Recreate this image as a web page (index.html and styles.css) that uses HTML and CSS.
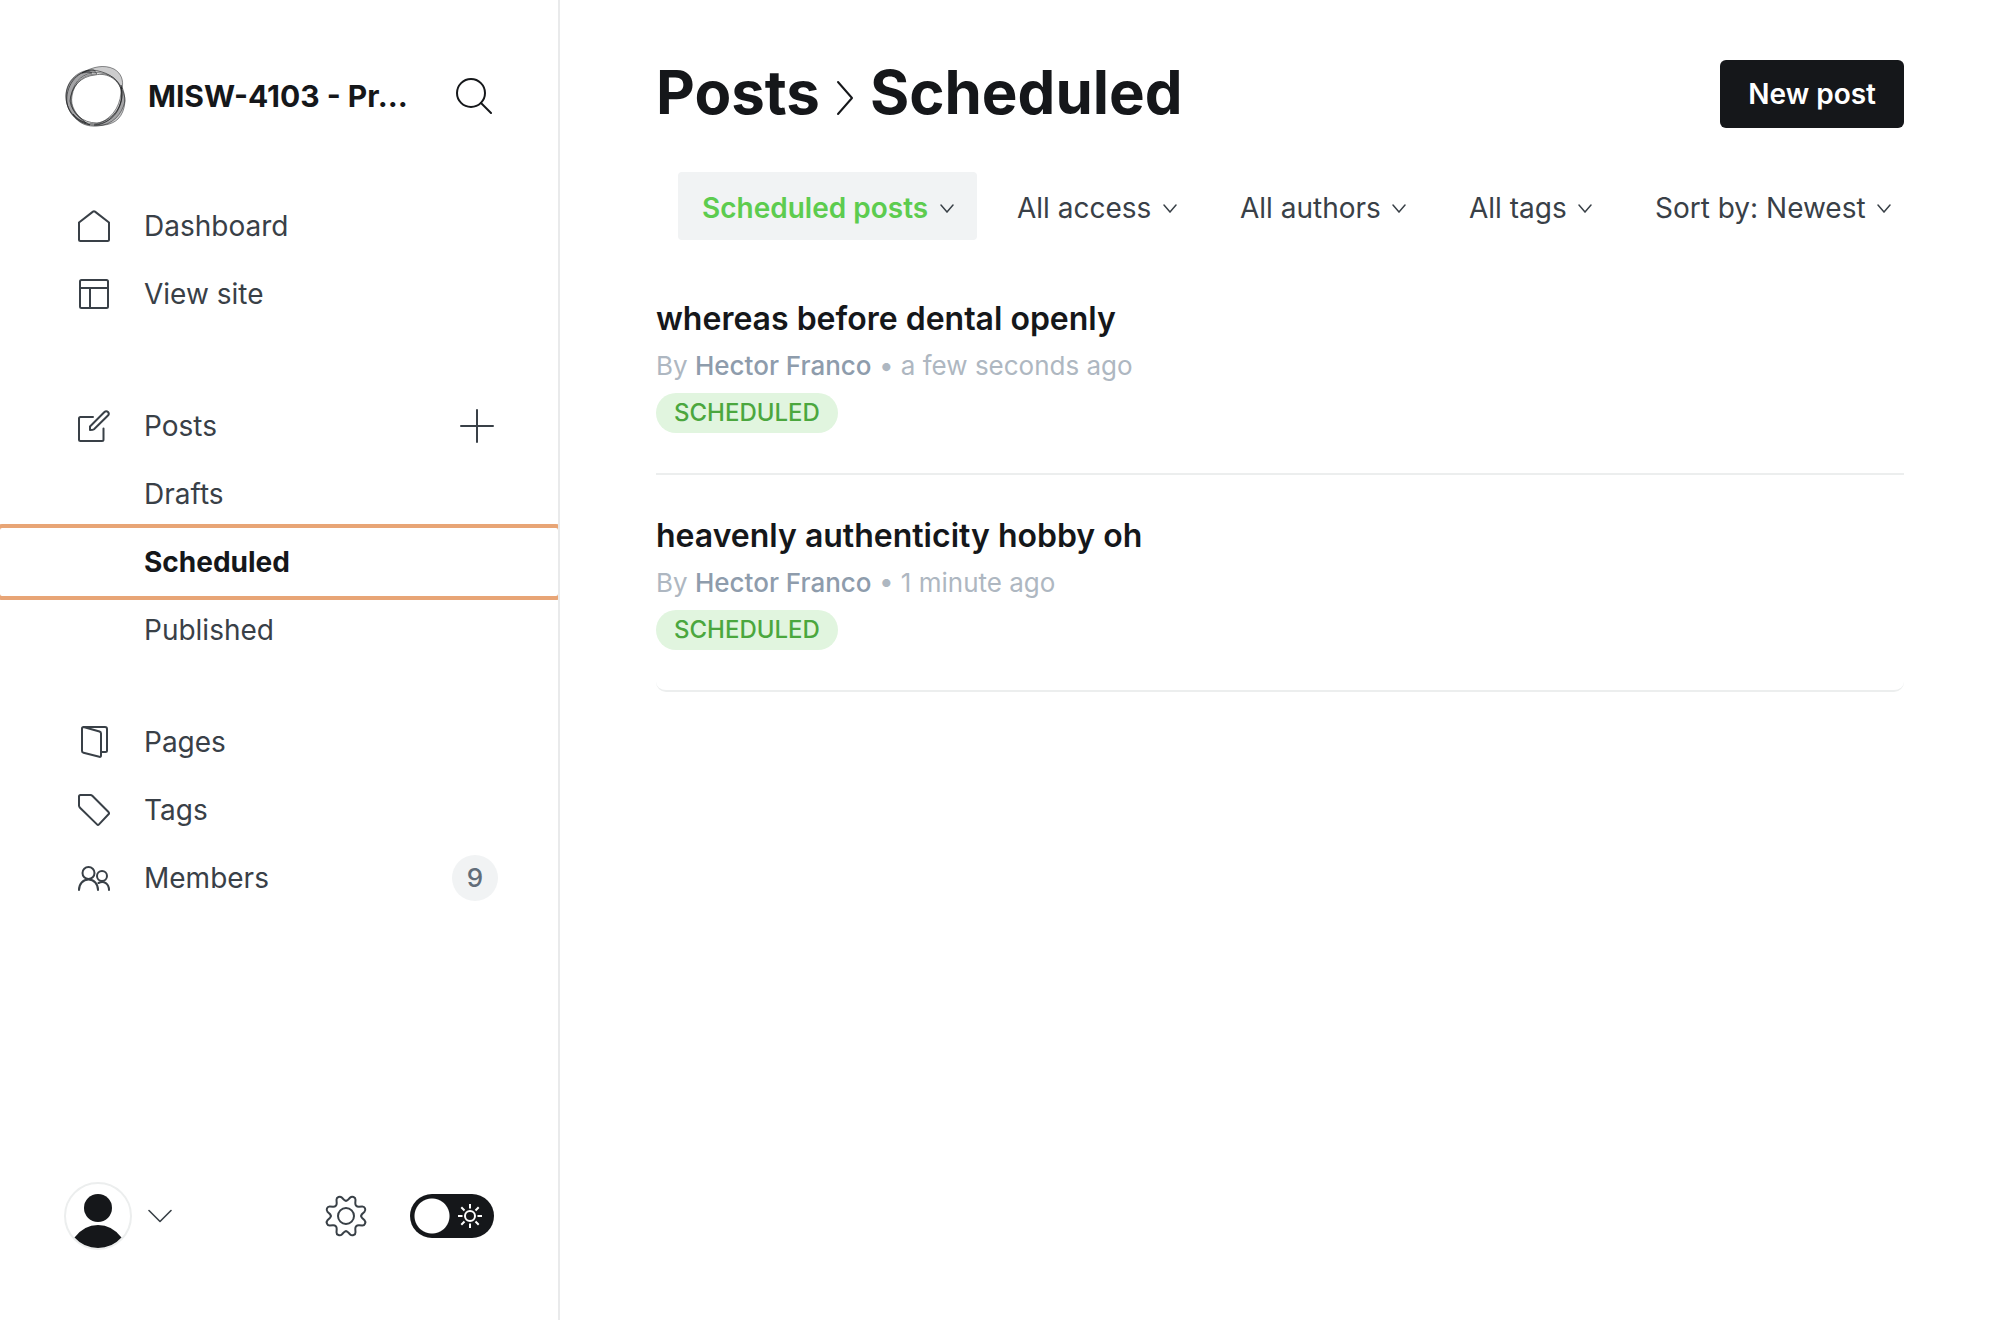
FILE: index.html
```html
<!DOCTYPE html>
<html lang="en">
<head>
<meta charset="utf-8">
<meta name="viewport" content="width=device-width, initial-scale=1">
<title>Posts - Scheduled</title>
<link rel="stylesheet" href="styles.css">
</head>
<body>
<div class="app">
  <aside class="sidebar">
    <header class="site">
      <svg class="site-logo" viewBox="0 0 62 62" fill="none" stroke="#15171a" aria-hidden="true">
        <g fill="#15171a" fill-opacity=".22" stroke-width=".6" stroke-opacity=".8">
          <path d="M18 8C28 2 40 -1 50 4C57 8 60 15 58 24C54 14 46 9 36 8C30 7 24 7 18 8Z"/>
          <path d="M30 5C15 4 2 15 2 31C2 44 10 54 22 58C12 50 6 41 8 31C10 18 19 9 33 9Z"/>
          <path d="M24 6C10 9 1 20 2 34C3 46 12 57 26 60C13 52 6 44 7 32C9 19 16 10 28 8Z"/>
          <path d="M57 20C63 31 62 46 54 54C48 60 38 61 30 60C42 58 50 53 54 45C58 37 59 30 57 20Z"/>
          <path d="M57 22C58 38 50 52 36 58C28 60 16 58 9 49C14 59 24 62 34 61C48 60 58 50 61 36C61 31 59 26 57 22Z"/>
        </g>
        <g stroke-width=".8" stroke-opacity=".75">
          <path d="M28 5C40 6 54 12 57 24C60 40 50 57 33 60C17 61 5 51 3 38C1 22 12 6 28 5Z"/>
          <path d="M31 10C44 7 55 15 58 27C59 42 48 56 33 58C18 58 8 48 6 36C7 22 17 11 31 10Z"/>
        </g>
      </svg>
      <span class="site-name">MISW-4103 - Pr…</span>
      <button class="icon-button" aria-label="Search site">
        <svg class="icon-search" viewBox="0 0 36 36" fill="none" stroke="currentColor" stroke-width="2" stroke-linecap="round"><circle cx="15" cy="15" r="14"/><path d="M25 25L35 35"/></svg>
      </button>
    </header>

    <nav class="menu" aria-label="Main">
      <ul class="menu-group">
        <li><a class="menu-link" href="#dashboard">
          <svg class="icon" viewBox="0 0 32 32"><path d="M1 12.500L15 1.600Q16 .8 17 1.600L31 12.500V29.500Q31 31 29.500 31H2.500Q1 31 1 29.500Z"/></svg>
          Dashboard</a></li>
        <li><a class="menu-link" href="#site">
          <svg class="icon" viewBox="0 0 32 32"><rect x="2" y="2" width="28" height="28" rx="1.500"/><path d="M2 10H30M12 10V30"/></svg>
          View site</a></li>
      </ul>
      <ul class="menu-group menu-posts">
        <li class="menu-row"><a class="menu-link" href="#posts">
          <svg class="icon" viewBox="0 0 32 32"><path d="M15 7H2.500Q1 7 1 8.500V29.500Q1 31 2.500 31H24Q25.500 31 25.500 29.500V18.500M12 20V16.500L26.200 2.300Q28.200 .3 30 2Q31.700 3.800 29.700 5.800L16 19.200Q15 20 12 20Z"/></svg>
          Posts</a>
          <button class="icon-button" aria-label="New post">
            <svg class="icon-plus" viewBox="0 0 34 34" fill="none" stroke="currentColor" stroke-width="2" stroke-linecap="round"><path d="M17 1V33M1 17H33"/></svg>
          </button></li>
        <li><a class="menu-link menu-sub" href="#drafts">Drafts</a></li>
        <li><a class="menu-link menu-sub is-active" href="#scheduled" aria-current="page">Scheduled</a></li>
        <li><a class="menu-link menu-sub" href="#published">Published</a></li>
      </ul>
      <ul class="menu-group">
        <li><a class="menu-link" href="#pages">
          <svg class="icon" viewBox="0 0 32 32"><path d="M5.500 1L21.500 5.500Q23 6 23 7.500V29.500Q23 31.300 21.300 30.800L5.500 26.700Q4 26.300 4 25V2.500Q4 1 5.500 1H27Q29 1 29 3V24.500Q29 26 27.500 26H23"/></svg>
          Pages</a></li>
        <li><a class="menu-link" href="#tags">
          <svg class="icon" viewBox="0 0 32 32"><path d="M2.500 1H12.500Q13.500 1 14.300 1.800L30.500 18Q31.500 19.300 30.500 20.300L21 30.400Q20 31.500 19 30.400L2 13.700Q1 12.700 1 11.500V2.500Q1 1 2.500 1Z"/></svg>
          Tags</a></li>
        <li class="menu-row"><a class="menu-link" href="#members">
          <svg class="icon" viewBox="0 0 32 32"><circle cx="10.500" cy="11" r="6"/><circle cx="24" cy="14" r="5"/><path d="M1 28C1 22 5 17.500 10.500 17.500S20 22 20 28M20.500 21C26 18 31 22 31 28"/></svg>
          Members</a>
          <span class="count">9</span></li>
      </ul>
    </nav>

    <footer class="sidebar-footer">
      <button class="user" aria-label="Account menu">
        <svg class="avatar" viewBox="0 0 68 68"><circle cx="34" cy="34" r="33" fill="#fff" stroke="#eceeee" stroke-width="2"/><circle cx="34" cy="26" r="14" fill="#15171a"/><path d="M10.500 55.500Q20 43 34 43T57.500 55.500Q48 66 34 66T10.500 55.500Z" fill="#15171a"/></svg>
        <svg class="user-chevron" viewBox="0 0 24 14" fill="none" stroke="currentColor" stroke-width="1.600" stroke-linecap="round" stroke-linejoin="round"><path d="M1 1.500L12 12.500L23 1.500"/></svg>
      </button>
      <a class="settings" href="#settings" aria-label="Settings">
        <svg class="icon-gear" viewBox="-21 -21 42 42" fill="none" stroke="currentColor" stroke-width="2" stroke-linecap="round">
          <path id="gear" d="M0 -15.200C1.500 -15.200 2 -16 2.800 -17L4.200 -18.500C6 -20.200 9.600 -19 9.500 -16.200L9.300 -13C9.200 -10.500 10.500 -9.200 13 -9.300L16.200 -9.500C19 -9.600 20.200 -6 18.500 -4.200L17 -2.800C16 -2 15.200 -1.500 15.200 0"/>
          <use href="#gear" transform="rotate(90)"/><use href="#gear" transform="rotate(180)"/><use href="#gear" transform="rotate(270)"/>
          <circle r="8"/>
        </svg>
      </a>
      <label class="theme">
        <input class="theme-input" type="checkbox" aria-label="Dark mode">
        <svg class="theme-sun" viewBox="-12 -12 24 24" fill="none" stroke="#fff" stroke-width="2"><circle r="5"/><path d="M0 -12V-7.500M0 12V7.500M-12 0H-7.500M12 0H7.500M-8.700 -8.700L-5.500 -5.500M8.700 8.700L5.500 5.500M8.700 -8.700L5.500 -5.500M-8.700 8.700L-5.500 5.500"/></svg>
      </label>
    </footer>
  </aside>

  <main class="content">
    <header class="page-header">
      <h1 class="page-title">
        <a href="#posts">Posts</a>
        <svg class="title-chevron" viewBox="0 0 16 36" fill="none" stroke="currentColor" stroke-width="2" stroke-linecap="round" stroke-linejoin="round"><path d="M1 2L15 18L1 34"/></svg>
        <span>Scheduled</span>
      </h1>
      <button class="primary">New post</button>
    </header>

    <div class="filters">
      <label class="filter is-selected"><select aria-label="Post type"><option>Scheduled posts</option></select>
        <svg class="filter-chevron" viewBox="0 0 14 9"><path d="M1 1L7 8L13 1"/></svg></label>
      <label class="filter"><select aria-label="Access"><option>All access</option></select>
        <svg class="filter-chevron" viewBox="0 0 14 9"><path d="M1 1L7 8L13 1"/></svg></label>
      <label class="filter"><select aria-label="Author"><option>All authors</option></select>
        <svg class="filter-chevron" viewBox="0 0 14 9"><path d="M1 1L7 8L13 1"/></svg></label>
      <label class="filter"><select aria-label="Tag"><option>All tags</option></select>
        <svg class="filter-chevron" viewBox="0 0 14 9"><path d="M1 1L7 8L13 1"/></svg></label>
      <label class="filter"><select aria-label="Sort order"><option>Sort by: Newest</option></select>
        <svg class="filter-chevron" viewBox="0 0 14 9"><path d="M1 1L7 8L13 1"/></svg></label>
    </div>

    <ul class="posts">
      <li class="post">
        <h2 class="post-title"><a href="#post-1">whereas before dental openly</a></h2>
        <p class="post-meta">By <strong>Hector Franco</strong> • a few seconds ago</p>
        <span class="status">SCHEDULED</span>
      </li>
      <li class="post">
        <h2 class="post-title"><a href="#post-2">heavenly authenticity hobby oh</a></h2>
        <p class="post-meta">By <strong>Hector Franco</strong> • 1 minute ago</p>
        <span class="status">SCHEDULED</span>
      </li>
    </ul>
  </main>
</div>
</body>
</html>
```
FILE: styles.css
```css
*, *::before, *::after { box-sizing: border-box; }

body {
  margin: 0;
  background: #fff;
  color: #15171a;
  font-family: Inter, "Liberation Sans", sans-serif;
  font-size: 28px;
  line-height: 44px;
}

a { color: inherit; text-decoration: none; }
ul, h1, h2, p { margin: 0; padding: 0; }
ul { list-style: none; }
svg { display: block; flex: none; }
button, select { font: inherit; color: inherit; }
button { border: 0; background: none; padding: 0; cursor: pointer; }

.app { display: flex; min-height: 100vh; }

/* Sidebar */
.sidebar {
  display: flex;
  flex-direction: column;
  flex: 0 0 560px;
  min-width: 0;
  border-right: 2px solid #e9eaeb;
}

.site {
  display: flex;
  align-items: center;
  gap: 22px;
  padding: 64px 66px 0 64px;
}
.site-logo { width: 62px; height: 64px; }
.site-name {
  flex: 1;
  min-width: 0;
  overflow: hidden;
  white-space: nowrap;
  text-overflow: ellipsis;
  font-size: 30px;
  font-weight: 700;
}
.icon-button { display: flex; }
.icon-search { width: 36px; height: 36px; }

.menu { flex: 1; overflow: hidden; padding-top: 64px; color: #394047; }
.menu-group { margin-bottom: 64px; }
.menu-posts { margin-bottom: 44px; }
.menu-row { display: flex; align-items: center; padding-right: 64px; }
.menu-row .menu-link { flex: 1; }
.menu-link {
  display: flex;
  align-items: center;
  gap: 34px;
  height: 68px;
  padding-left: 78px;
}
.menu-sub { padding-left: 144px; }
.menu-sub.is-active {
  color: #15171a;
  font-weight: 700;
  border-radius: 2px;
  outline: 4px solid #e8a576;
}
.icon {
  width: 32px;
  height: 32px;
  fill: none;
  stroke: currentColor;
  stroke-width: 2;
  stroke-linecap: round;
  stroke-linejoin: round;
}
.icon-plus { width: 34px; height: 34px; }
.count {
  min-width: 46px;
  height: 46px;
  margin-right: -4px;
  border-radius: 23px;
  background: #f1f3f4;
  color: #626d79;
  font-size: 26px;
  font-weight: 500;
  line-height: 46px;
  text-align: center;
}

.sidebar-footer {
  display: flex;
  align-items: center;
  gap: 43px;
  padding: 0 64px 70px;
  color: #394047;
}
.user { display: flex; align-items: center; gap: 16px; margin-right: auto; }
.avatar { width: 68px; height: 68px; }
.user-chevron { width: 24px; height: 14px; }
.icon-gear { width: 42px; height: 42px; }
.theme { position: relative; display: block; width: 84px; height: 44px; }
.theme-input {
  display: block;
  appearance: none;
  width: 84px;
  height: 44px;
  margin: 0;
  border-radius: 22px;
  background: radial-gradient(circle at 22px 22px, #fff 17px, #15171a 18px);
}
.theme-sun { position: absolute; top: 10px; right: 12px; width: 24px; height: 24px; }

/* Content */
.content { flex: 1; min-width: 0; padding: 60px 96px; }

.page-header { display: flex; align-items: center; justify-content: space-between; }
.page-title {
  display: flex;
  align-items: center;
  gap: 16px;
  margin-bottom: 4px;
  font-size: 60px;
  font-weight: 700;
  line-height: 64px;
}
.title-chevron { width: 18px; height: 36px; margin-top: 12px; }
.primary {
  height: 68px;
  padding: 0 28px;
  border-radius: 6px;
  background: #15171a;
  color: #fff;
  font-weight: 600;
}

.filters {
  display: flex;
  flex-wrap: wrap;
  justify-content: flex-end;
  gap: 16px;
  margin-top: 44px;
  color: #394047;
}
.filter { position: relative; display: block; }
.filter select {
  display: block;
  appearance: none;
  height: 68px;
  padding: 4px 48px 0 24px;
  border: 0;
  border-radius: 4px;
  background: none;
}
.filter.is-selected select { background: #f1f3f4; color: #5dcc4f; font-weight: 600; }
.filter:last-child select { padding-right: 38px; }
.filter-chevron {
  position: absolute;
  top: 32px;
  right: 23px;
  width: 14px;
  height: 9px;
  fill: none;
  stroke: #394047;
  stroke-width: 1.5;
  stroke-linecap: round;
  pointer-events: none;
}
.filter:last-child .filter-chevron { right: 13px; }

.posts { margin-top: 18px; }
.post {
  padding: 40px 0;
  border-bottom: 2px solid #eceeee;
}
.post:last-child { border-radius: 0 0 10px 10px; }
.post-title { font-size: 32px; font-weight: 600; line-height: 42px; }
.post-meta { margin-top: 6px; color: #aeb7c1; font-size: 26px; line-height: 40px; }
.post-meta strong { color: #8e9cac; font-weight: 500; }
.status {
  display: block;
  width: fit-content;
  margin-top: 7px;
  padding: 0 18px;
  border-radius: 20px;
  background: #e1f5df;
  color: #4ba73e;
  font-size: 24px;
  font-weight: 500;
  line-height: 40px;
}
```
